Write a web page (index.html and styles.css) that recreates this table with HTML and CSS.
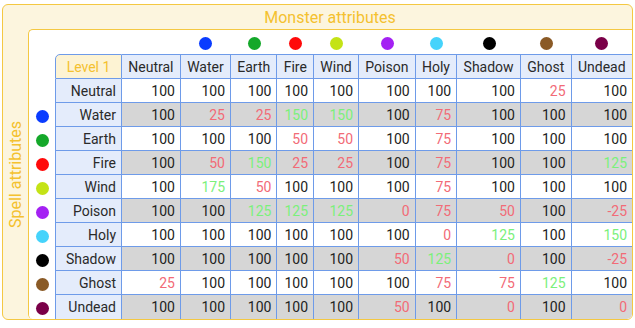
FILE: index.html
```html
<!DOCTYPE html>
<html>
<head>
<meta charset="utf-8">
<link rel="stylesheet" href="styles.css">
</head>
<body>
<div class="panel">
  <div class="corner"></div>
  <div class="title">Monster attributes</div>
  <div class="side"><span class="side-text">Spell attributes</span></div>
  <div class="inner">
    <table class="grid">
      <tr class="dots">
        <td class="dotcell"></td>
        <td class="dotcell"></td>
        <td class="dotcell"></td>
        <td class="dotcell"><span class="dot water"></span></td>
        <td class="dotcell"><span class="dot earth"></span></td>
        <td class="dotcell"><span class="dot fire"></span></td>
        <td class="dotcell"><span class="dot wind"></span></td>
        <td class="dotcell"><span class="dot poison"></span></td>
        <td class="dotcell"><span class="dot holy"></span></td>
        <td class="dotcell"><span class="dot shadow"></span></td>
        <td class="dotcell"><span class="dot ghost"></span></td>
        <td class="dotcell"><span class="dot undead"></span></td>
      </tr>
      <tr class="head">
        <td class="dotcol"></td>
        <th class="level">Level 1</th>
        <th>Neutral</th><th>Water</th><th>Earth</th><th>Fire</th><th>Wind</th><th>Poison</th><th>Holy</th><th>Shadow</th><th>Ghost</th><th class="last">Undead</th>
      </tr>
      <tr class="row white">
        <td class="dotcol"></td>
        <th class="rh">Neutral</th>
        <td>100</td><td>100</td><td>100</td><td>100</td><td>100</td><td>100</td><td>100</td><td>100</td><td class="lo">25</td><td class="last">100</td>
      </tr>
      <tr class="row gray">
        <td class="dotcol"><span class="dot water"></span></td>
        <th class="rh">Water</th>
        <td>100</td><td class="lo">25</td><td class="lo">25</td><td class="hi">150</td><td class="hi">150</td><td>100</td><td class="lo">75</td><td>100</td><td>100</td><td class="last">100</td>
      </tr>
      <tr class="row white">
        <td class="dotcol"><span class="dot earth"></span></td>
        <th class="rh">Earth</th>
        <td>100</td><td>100</td><td>100</td><td class="lo">50</td><td class="lo">50</td><td>100</td><td class="lo">75</td><td>100</td><td>100</td><td class="last">100</td>
      </tr>
      <tr class="row gray">
        <td class="dotcol"><span class="dot fire"></span></td>
        <th class="rh">Fire</th>
        <td>100</td><td class="lo">50</td><td class="hi">150</td><td class="lo">25</td><td class="lo">25</td><td>100</td><td class="lo">75</td><td>100</td><td>100</td><td class="last hi">125</td>
      </tr>
      <tr class="row white">
        <td class="dotcol"><span class="dot wind"></span></td>
        <th class="rh">Wind</th>
        <td>100</td><td class="hi">175</td><td class="lo">50</td><td>100</td><td>100</td><td>100</td><td class="lo">75</td><td>100</td><td>100</td><td class="last">100</td>
      </tr>
      <tr class="row gray">
        <td class="dotcol"><span class="dot poison"></span></td>
        <th class="rh">Poison</th>
        <td>100</td><td>100</td><td class="hi">125</td><td class="hi">125</td><td class="hi">125</td><td class="lo">0</td><td class="lo">75</td><td class="lo">50</td><td>100</td><td class="last lo">-25</td>
      </tr>
      <tr class="row white">
        <td class="dotcol"><span class="dot holy"></span></td>
        <th class="rh">Holy</th>
        <td>100</td><td>100</td><td>100</td><td>100</td><td>100</td><td>100</td><td class="lo">0</td><td class="hi">125</td><td>100</td><td class="last hi">150</td>
      </tr>
      <tr class="row gray">
        <td class="dotcol"><span class="dot shadow"></span></td>
        <th class="rh">Shadow</th>
        <td>100</td><td>100</td><td>100</td><td>100</td><td>100</td><td class="lo">50</td><td class="hi">125</td><td class="lo">0</td><td>100</td><td class="last lo">-25</td>
      </tr>
      <tr class="row white">
        <td class="dotcol"><span class="dot ghost"></span></td>
        <th class="rh">Ghost</th>
        <td class="lo">25</td><td>100</td><td>100</td><td>100</td><td>100</td><td>100</td><td class="lo">75</td><td class="lo">75</td><td class="hi">125</td><td class="last">100</td>
      </tr>
      <tr class="row gray final">
        <td class="dotcol"><span class="dot undead"></span></td>
        <th class="rh">Undead</th>
        <td>100</td><td>100</td><td>100</td><td>100</td><td>100</td><td class="lo">50</td><td>100</td><td class="lo">0</td><td>100</td><td class="last lo">0</td>
      </tr>
    </table>
  </div>
</div>
</body>
</html>
```
FILE: styles.css
```css
html, body {
  margin: 0;
  padding: 0;
  background: #ffffff;
}
body {
  font-family: Roboto, "Liberation Sans", sans-serif;
  color: #222222;
}
.panel {
  margin: 4px 2px 0 2px;
  height: 316px;
  box-sizing: border-box;
  border: 1px solid #f4c842;
  border-radius: 6px;
  background: #fcf5de;
  display: grid;
  grid-template-columns: 25px 1fr;
  grid-template-rows: 24px 1fr;
  overflow: hidden;
}
.title {
  display: flex;
  align-items: center;
  justify-content: center;
  font-size: 16px;
  color: #f4c12f;
}
.side {
  display: flex;
  align-items: center;
  justify-content: center;
}
.side-text {
  writing-mode: vertical-rl;
  transform: rotate(180deg);
  font-size: 16px;
  color: #f4c12f;
  white-space: nowrap;
}
.inner {
  border-top: 1px solid #f4c842;
  border-left: 1px solid #f4c842;
  border-radius: 5px 0 0 5px;
  background: #ffffff;
  overflow: hidden;
}
.grid {
  width: 100%;
  border-collapse: separate;
  border-spacing: 0;
  font-size: 14px;
}
.grid td, .grid th {
  padding: 0 5px;
  white-space: nowrap;
  font-weight: normal;
}
.dots {
  height: 24px;
}
.dotcell {
  text-align: center;
  vertical-align: middle;
  padding: 0;
}
.dotcol {
  width: 26px;
  padding: 0 !important;
  text-align: center;
  vertical-align: middle;
  background: #ffffff;
}
.dot {
  display: inline-block;
  width: 13px;
  height: 13px;
  border-radius: 50%;
  vertical-align: middle;
}
.water { background: #0a3cff; }
.earth { background: #14a82a; }
.fire { background: #ff0a0a; }
.wind { background: #c4e316; }
.poison { background: #a421f3; }
.holy { background: #45d3fb; }
.shadow { background: #000000; }
.ghost { background: #8a5a26; }
.undead { background: #7a0048; }

.head {
  height: 25px;
}
.head th {
  background: #e4ecfb;
  border-top: 1px solid #6e9be9;
  border-right: 1px solid #6e9be9;
  border-bottom: 1px solid #6e9be9;
  text-align: center;
  padding: 0 6px;
  color: #2a2a2a;
}
.head th.level {
  width: 53px;
  background: #fdf3d3;
  color: #f4c12f;
  border-left: 1px solid #6e9be9;
  border-top-left-radius: 5px;
}
.head th.last {
  border-right: none;
}
.row {
  height: 24px;
}
.row td:not(.dotcol), .row th {
  border-right: 1px solid #6e9be9;
  border-bottom: 1px solid #6e9be9;
  text-align: right;
}
.row th.rh {
  background: #e4ecfb;
  border-left: 1px solid #6e9be9;
  color: #2a2a2a;
}
.row td.last {
  border-right: none;
}
.row.final td:not(.dotcol), .row.final th {
  border-bottom: none;
}
.white td:not(.dotcol) {
  background: #ffffff;
}
.gray td:not(.dotcol) {
  background: #d6d6d6;
}
.lo {
  color: #f26b77;
}
.hi {
  color: #7bf07b;
}
```
